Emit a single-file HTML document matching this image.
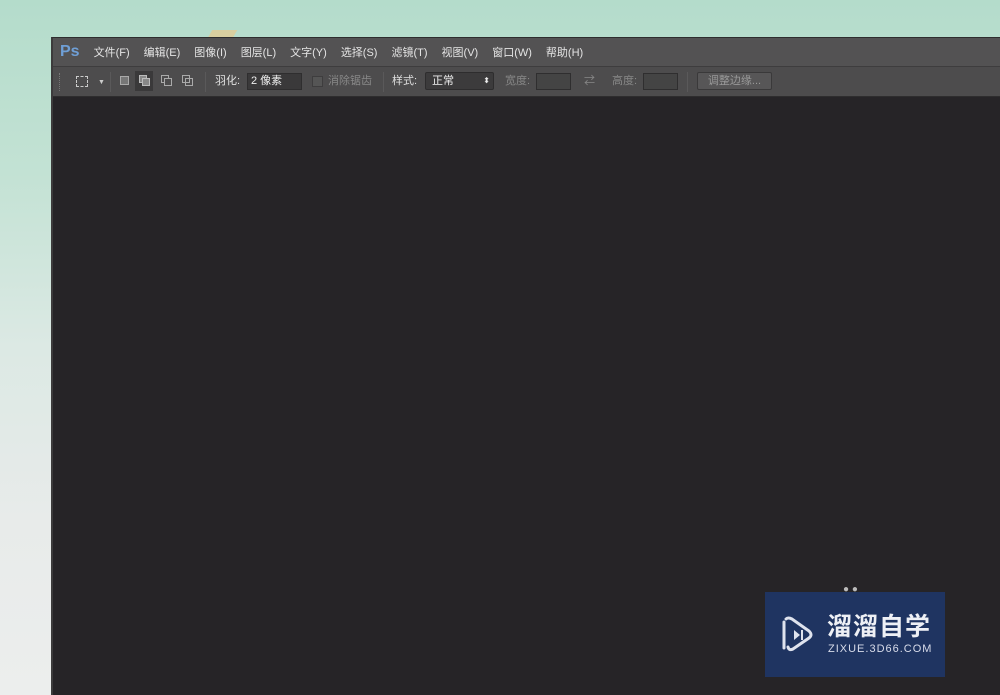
<!DOCTYPE html>
<html><head><meta charset="utf-8"><style>
*{margin:0;padding:0;box-sizing:border-box}
body{width:1000px;height:695px;overflow:hidden;position:relative;font-family:"Liberation Sans","Noto Sans CJK SC",sans-serif;background:linear-gradient(180deg,#b4dccb 0%,#c3e2d4 25%,#dce9e4 50%,#e8ebea 75%,#eceeed 100%)}
#win{position:absolute;left:51px;top:37px;width:949px;height:658px;background:#262427;border-left:2px solid #3c3b3c;border-top:1px solid #2e2d2e}
#menu{height:28px;background:#535253;display:flex;align-items:center;font-size:11px;color:#e4e4e4}
#menu .ps{color:#6f9fd6;font-weight:bold;font-size:16px;margin:0 14px 0 7px}
#menu span{margin-right:14px}
#tool{height:31px;background:#4d4c4d;border-top:1px solid #3e3d3e;border-bottom:1px solid #2e2d2e;position:relative;font-size:11px;color:#e0e0e0;line-height:14px}
#tool>*{position:absolute}
.sep{width:1px;height:20px;top:5px;background:#3a393a;border-right:1px solid #5a595a}
.in{background:#3a393a;border:1px solid #2f2e2f;height:17px;top:6px}
</style></head><body>
<div style="position:absolute;left:210px;top:30px;width:25px;height:8px;background:#d9cfa0;transform:skewX(-30deg)"></div>
<div id="win">
<div id="menu"><span class="ps">Ps</span><span>文件(F)</span><span>编辑(E)</span><span>图像(I)</span><span>图层(L)</span><span>文字(Y)</span><span>选择(S)</span><span>滤镜(T)</span><span>视图(V)</span><span>窗口(W)</span><span>帮助(H)</span></div>
<div id="tool">
<div style="left:6px;top:6px;width:3px;height:18px;border-left:1px dotted #777"></div>
<div style="left:23px;top:9px;width:12px;height:11px;border:1px dashed #ccc"></div>
<div style="left:45px;top:9px;color:#ccc;font-size:7px">▼</div>
<div class="sep" style="left:57px"></div>
<div style="left:67px;top:9px;width:9px;height:9px;border:1px solid #aaa;background:#777"></div>
<div style="left:82px;top:4px;width:18px;height:20px;background:#3a393a"></div>
<div style="left:86px;top:8px;width:8px;height:8px;border:1px solid #bbb;background:#888"></div><div style="left:89px;top:11px;width:8px;height:8px;border:1px solid #bbb;background:#888"></div>
<div style="left:108px;top:8px;width:8px;height:8px;border:1px solid #aaa"></div><div style="left:111px;top:11px;width:8px;height:8px;border:1px solid #aaa;background:#4d4c4d"></div>
<div style="left:129px;top:8px;width:8px;height:8px;border:1px solid #aaa"></div><div style="left:132px;top:11px;width:8px;height:8px;border:1px solid #aaa"></div>
<div class="sep" style="left:152px"></div>
<div style="left:162px;top:7px">羽化:</div>
<div class="in" style="left:194px;width:55px;color:#eee;padding-left:3px;line-height:15px">2 像素</div>
<div style="left:259px;top:9px;width:11px;height:11px;background:#555;border:1px solid #3e3d3e"></div>
<div style="left:275px;top:7px;color:#888">消除锯齿</div>
<div class="sep" style="left:330px"></div>
<div style="left:339px;top:7px">样式:</div>
<div style="left:372px;top:5px;width:69px;height:18px;background:#3c3b3c;border:1px solid #2e2d2e;border-radius:2px;color:#eee;padding-left:6px;line-height:16px">正常<span style="position:absolute;right:3px;top:0;font-size:8px">⬍</span></div>
<div style="left:452px;top:7px;color:#888">宽度:</div>
<div class="in" style="left:483px;width:35px;background:#444"></div>
<div style="left:531px;top:7px;color:#888">⇄</div>
<div style="left:559px;top:7px;color:#888">高度:</div>
<div class="in" style="left:590px;width:35px;background:#444"></div>
<div class="sep" style="left:634px"></div>
<div style="left:644px;top:5px;width:75px;height:18px;background:#575657;border:1px solid #3a393a;border-radius:2px;color:#999;text-align:center;line-height:16px">调整边缘...</div>
</div>
</div>
<div style="position:absolute;left:843px;top:587px;width:25px;height:6px;color:#bbb;font-size:10px;line-height:6px">● ●</div>
<div style="position:absolute;left:765px;top:592px;width:180px;height:85px;background:#1f3461">
<svg style="position:absolute;left:14px;top:22px" width="38" height="42" viewBox="0 0 38 42"><path d="M5 8 V34 M7 5 Q9 3 13 5 L30 17 Q34 21 30 24 L14 35 Q10 37 9 33" fill="none" stroke="#dfe3ee" stroke-width="3" stroke-linecap="round"/><path d="M15 16 V26 L21 21Z" fill="#dfe3ee"/><path d="M23 16 V26" stroke="#dfe3ee" stroke-width="2"/></svg>
<div style="position:absolute;left:62px;top:18px;color:#eef0f5;font-size:25px;font-weight:bold;letter-spacing:1px;font-family:'Noto Sans CJK SC',sans-serif;line-height:30px">溜溜自学</div>
<div style="position:absolute;left:63px;top:51px;color:#d8dcea;font-size:11px;letter-spacing:1px">ZIXUE.3D66.COM</div>
</div>
</body></html>
